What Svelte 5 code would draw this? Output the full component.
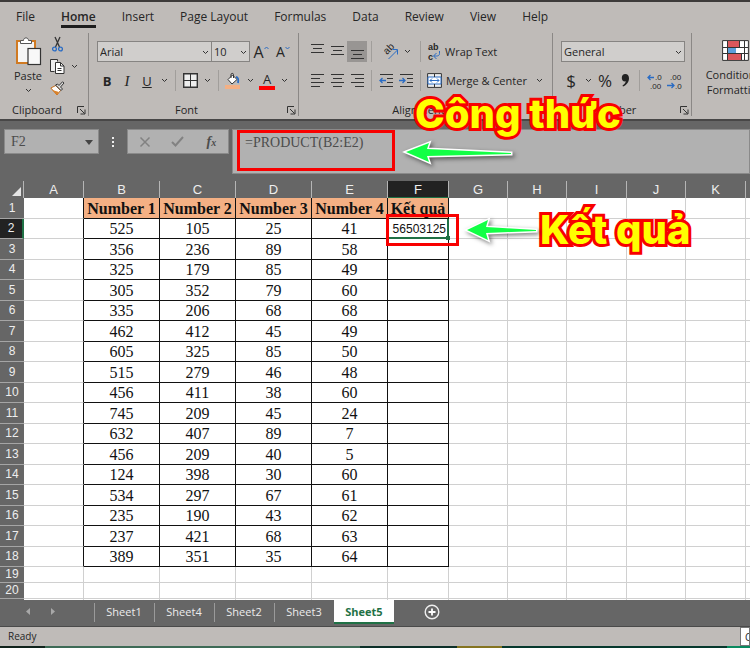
<script>
	const menu = ['File', 'Home', 'Insert', 'Page Layout', 'Formulas', 'Data', 'Review', 'View', 'Help'];

	const columns = [
		{ name: 'A', width: 60 },
		{ name: 'B', width: 76 },
		{ name: 'C', width: 76 },
		{ name: 'D', width: 76 },
		{ name: 'E', width: 76 },
		{ name: 'F', width: 61 },
		{ name: 'G', width: 59 },
		{ name: 'H', width: 59 },
		{ name: 'I', width: 60 },
		{ name: 'J', width: 59 },
		{ name: 'K', width: 60 },
		{ name: 'L', width: 59 }
	];

	const rows = [
		['Number 1', 'Number 2', 'Number 3', 'Number 4', 'Kết quả'],
		[525, 105, 25, 41, 56503125],
		[356, 236, 89, 58, ''],
		[325, 179, 85, 49, ''],
		[305, 352, 79, 60, ''],
		[335, 206, 68, 68, ''],
		[462, 412, 45, 49, ''],
		[605, 325, 85, 50, ''],
		[515, 279, 46, 48, ''],
		[456, 411, 38, 60, ''],
		[745, 209, 45, 24, ''],
		[632, 407, 89, 7, ''],
		[456, 209, 40, 5, ''],
		[124, 398, 30, 60, ''],
		[534, 297, 67, 61, ''],
		[235, 190, 43, 62, ''],
		[237, 421, 68, 63, ''],
		[389, 351, 35, 64, '']
	];
	const emptyRows = [19, 20, 21, 22];

	const sheets = ['Sheet1', 'Sheet4', 'Sheet2', 'Sheet3', 'Sheet5'];

	let active = $state('Sheet5');
	let tab = $state('Home');
	let formula = $state('=PRODUCT(B2:E2)');

	// line lengths for the text align icons
	const alignIcons = {
		left: ['1 14', '1 10', '1 14', '1 10'],
		center: ['1 14', '3 12', '1 14', '3 12'],
		right: ['1 14', '5 14', '1 14', '5 14']
	};
</script>

{#snippet chevron()}
	<svg class="chev" width="7" height="5" viewBox="0 0 7 5"><path d="M1 1l2.5 2.5L6 1" /></svg>
{/snippet}

{#snippet footer(label, launcher)}
	<div class="footer">
		<span>{label}</span>
		{#if launcher}
			<button class="launcher" aria-label="{label} settings">
				<svg width="9" height="9" viewBox="0 0 9 9"><path d="M.5 7V.5H7M3 3l4.5 4.5M8 3.5V8H3.5" /></svg>
			</button>
		{/if}
	</div>
{/snippet}

{#snippet lines(list, y)}
	<svg width="15" height="21" viewBox="0 0 15 21">
		{#each list as l, i}
			<path d="M{l.split(' ')[0]} {y + i * 4 + 0.5}H{l.split(' ')[1]}" />
		{/each}
	</svg>
{/snippet}

<div class="app">
	<nav class="menu">
		{#each menu as item}
			<button class:current={item === tab} onclick={() => (tab = item)}>{item}</button>
		{/each}
	</nav>

	<div class="ribbon">
		<section class="group clipboard">
			<div class="body">
				<button class="paste">
					<svg width="27" height="29" viewBox="0 0 27 29">
						<rect x="2" y="4" width="18" height="22" fill="#f5f5f5" stroke="#d07a22" stroke-width="2" />
						<path d="M5.500 6.500V3.500h3c0-3.500 5-3.500 5 0h3v3z" fill="#fff" stroke="#555" />
						<rect x="13" y="11.500" width="12.500" height="16" fill="#f8f8f8" stroke="#333" stroke-width="1.200" />
					</svg>
					<span>Paste</span>
					{@render chevron()}
				</button>
				<div class="clips">
					<button aria-label="Cut">
						<svg width="15" height="15" viewBox="0 0 15 15">
							<path d="M5 0l4.500 10M10 0L5.500 10" stroke-width="1.300" />
							<circle cx="4.500" cy="12" r="1.900" stroke="#2a6cc4" stroke-width="1.300" />
							<circle cx="10.500" cy="12" r="1.900" stroke="#2a6cc4" stroke-width="1.300" />
						</svg>
					</button>
					<button aria-label="Copy">
						<svg width="15" height="15" viewBox="0 0 15 15">
							<path d="M4.500 12.500h-4V.5h7v2" fill="#eee" />
							<path d="M5.500 3.500h5l3.500 3.500v7.500H5.500z" fill="#fff" />
							<path d="M10.500 3.500V7H14M7.500 9.500h4M7.500 11.500h4" />
						</svg>
						{@render chevron()}
					</button>
					<button aria-label="Format Painter">
						<svg width="15" height="15" viewBox="0 0 15 15">
							<path d="M.8 7l5-2.500 4.700 5L7 14z" fill="#fff" stroke="#c96f1c" />
							<path d="M1 7.500L7 14l2-3-5-1.500z" fill="#d9822b" stroke="none" />
							<path d="M5.500 4l5.500 5.500L12.500 8l-2-2L14 2 12.500.8 9 4.500 7.500 3z" fill="#ddd" />
						</svg>
					</button>
				</div>
			</div>
			{@render footer('Clipboard', true)}
		</section>

		<section class="group font">
			<div class="body">
				<div class="line">
					<label class="pick family"><select aria-label="Font"><option>Arial</option></select>{@render chevron()}</label>
					<label class="pick size"><select aria-label="Font size"><option>10</option></select>{@render chevron()}</label>
					<button class="grow" aria-label="Increase font size"><span>A</span><svg width="5" height="4" viewBox="0 0 5 4"><path d="M.5 3l2-2 2 2" stroke="#2a6cc4" /></svg></button>
					<button class="shrink" aria-label="Decrease font size"><span>A</span><svg width="5" height="4" viewBox="0 0 5 4"><path d="M.5 1l2 2 2-2" stroke="#2a6cc4" /></svg></button>
				</div>
				<div class="line">
					<button class="tool"><b>B</b></button>
					<button class="tool"><i>I</i></button>
					<button class="tool"><u>U</u></button>
					<button class="drop" aria-label="Underline styles">{@render chevron()}</button>
					<span class="rule"></span>
					<button class="tool" aria-label="Borders">
						<svg width="15" height="15" viewBox="0 0 15 15"><path d="M.7.7h13.600v13.600H.7z" fill="#eee" stroke-width="1.400" /><path d="M7.500 1v13M1 7.500h13" /></svg>
					</button>
					<button class="drop" aria-label="Border styles">{@render chevron()}</button>
					<span class="rule"></span>
					<button class="tool" aria-label="Fill color">
						<svg width="16" height="16" viewBox="0 0 16 16">
							<path d="M3 6.500L7.500 2l4.500 4.500L7 11z" fill="#fff" />
							<path d="M6 5V1.500c0-1.500 2.500-1.500 2.500 0V5" />
							<path d="M11 4c2.500 0 2.500 3 2 6" stroke="#2a6cc4" stroke-width="1.800" />
							<path d="M0 12h15v4H0z" fill="#f4b084" stroke="none" />
						</svg>
					</button>
					<button class="drop" aria-label="Fill colors">{@render chevron()}</button>
					<button class="tool color">A</button>
					<button class="drop" aria-label="Font colors">{@render chevron()}</button>
				</div>
			</div>
			{@render footer('Font', true)}
		</section>

		<section class="group alignment">
			<div class="body">
				<div class="line">
					<button class="tool" aria-label="Top align">{@render lines(['1 14', '3 12', '1 14'], 3)}</button>
					<button class="tool" aria-label="Middle align">{@render lines(['1 14', '3 12', '1 14'], 5)}</button>
					<button class="tool pressed" aria-label="Bottom align">{@render lines(['1 14', '3 12', '1 14'], 9)}</button>
					<span class="rule"></span>
					<button class="angle" aria-label="Orientation">
						<svg width="17" height="17" viewBox="0 0 17 17">
							<text x="0" y="0" transform="translate(5 12) rotate(-45)">ab</text>
							<path d="M6.500 16l9-9M10.500 6.500H15.500V11.500" stroke="#2a6cc4" />
						</svg>
						{@render chevron()}
					</button>
					<span class="rule"></span>
					<button class="wide">
						<svg width="14" height="16" viewBox="0 0 14 16">
							<text x="1" y="6">ab</text>
							<text x="1" y="16">c</text>
							<path d="M12.500 7v2.500c0 2-1.500 2.500-3 2.500H7M9.500 9L6.500 12l3 3" stroke="#2a6cc4" />
						</svg>
						Wrap Text
					</button>
				</div>
				<div class="line">
					{#each Object.entries(alignIcons) as [name, list]}
						<button class="tool" aria-label="Align {name}">{@render lines(list, 4)}</button>
					{/each}
					<span class="rule"></span>
					<button class="tool" aria-label="Decrease indent">
						<svg width="15" height="15" viewBox="0 0 15 15"><path d="M1 1.500h13M8 5.500h6M8 9.500h6M1 13.500h13" /><path d="M7 7.500H1M3.500 5L1 7.500 3.500 10" stroke="#2a6cc4" stroke-width="1.300" /></svg>
					</button>
					<button class="tool" aria-label="Increase indent">
						<svg width="15" height="15" viewBox="0 0 15 15"><path d="M1 1.500h13M8 5.500h6M8 9.500h6M1 13.500h13" /><path d="M0 7.500h6M3.500 5L6 7.500 3.500 10" stroke="#2a6cc4" stroke-width="1.300" /></svg>
					</button>
					<span class="rule"></span>
					<button class="wide">
						<svg width="15" height="15" viewBox="0 0 15 15">
							<path d="M.6.6h13.800v13.800H.6z" fill="#eee" />
							<path d="M1 4h13v7H1z" fill="#fff" stroke="#2a6cc4" />
							<path d="M7.500 1v3M7.500 11v3" />
							<path d="M3 7.500h9M5 5.500l-2 2 2 2M10 5.500l2 2-2 2" stroke="#2a6cc4" />
						</svg>
						Merge &amp; Center
						{@render chevron()}
					</button>
				</div>
			</div>
			{@render footer('Alignment', true)}
		</section>

		<section class="group number">
			<div class="body">
				<div class="line">
					<label class="pick general"><select aria-label="Number format"><option>General</option></select>{@render chevron()}</label>
				</div>
				<div class="line">
					<button class="tool sign">$</button>
					<button class="drop" aria-label="Currencies">{@render chevron()}</button>
					<button class="tool sign">%</button>
					<button class="tool" aria-label="Comma style">
						<svg width="9" height="13" viewBox="0 0 9 13"><path d="M4.200 0C6.500 0 8 1.500 8 4.200 8 8 5.500 11 2 12.500l-.5-1C3.500 10.300 4.500 9 4.700 7.300 2.500 8 .8 6.300.8 4 .8 1.500 2.200 0 4.200 0z" fill="#222" stroke="none" /></svg>
					</button>
					<span class="rule"></span>
					<button class="tool" aria-label="Increase decimal">
						<svg width="15" height="16" viewBox="0 0 15 16"><text x="8" y="7">.0</text><text x="3" y="16">.00</text><path d="M7 4.500H1M3.500 2L1 4.500 3.500 7" stroke="#2a6cc4" stroke-width="1.300" /></svg>
					</button>
					<button class="tool" aria-label="Decrease decimal">
						<svg width="15" height="16" viewBox="0 0 15 16"><text x="3" y="7">.00</text><text x="8" y="16">.0</text><path d="M0 12.500h7M4.500 10L7 12.500 4.500 15" stroke="#2a6cc4" stroke-width="1.300" /></svg>
					</button>
				</div>
			</div>
			{@render footer('Number', true)}
		</section>

		<section class="group styles">
			<button class="conditional">
				<svg width="27" height="21" viewBox="0 0 27 21">
					<path d="M.6.6h25.800v19.800H.6z" fill="#fff" />
					<path d="M6 1h11v6H6zM6 14h13v6H6z" fill="#d9575c" stroke="none" />
					<path d="M6 7h8v7H6z" fill="#5b9fdb" stroke="none" />
					<path d="M1 7.500h25M1 13.500h25M5.500 1v19M17.500 1v6M19.500 14v6M22.500 1v19" />
				</svg>
				<span>Conditional</span>
				<span>Formatting</span>
			</button>
		</section>
	</div>

	<div class="formula-bar">
		<label class="name-box">
			<select aria-label="Name box"><option>F2</option></select>
			<svg width="8" height="5" viewBox="0 0 8 5"><path d="M0 0h8L4 5z" fill="#444" stroke="none" /></svg>
		</label>
		<span class="dots"></span>
		<div class="entry">
			<button aria-label="Cancel"><svg width="12" height="12" viewBox="0 0 12 12"><path d="M1.500 1.500l9 9M10.500 1.500l-9 9" stroke="#828282" stroke-width="1.500" /></svg></button>
			<button aria-label="Enter"><svg width="13" height="11" viewBox="0 0 13 11"><path d="M1 6l3.500 3.500L12 1" stroke="#828282" stroke-width="2" /></svg></button>
			<button class="fx">f<small>x</small></button>
		</div>
		<div class="formula">
			<input aria-label="Formula" bind:value={formula} />
		</div>
		<div class="callout top">
			<strong>Công thức</strong>
			<svg class="arrow" width="112" height="28" viewBox="0 0 112 28"><path d="M3 12L26 3l-2 6 84 4v1l-84 2 2 6z" /></svg>
		</div>
	</div>

	<main class="grid">
		<table>
			<colgroup>
				<col style="width: 24px" />
				{#each columns as col}
					<col style="width: {col.width}px" />
				{/each}
			</colgroup>
			<thead>
				<tr>
					<th class="corner"><svg width="9" height="9" viewBox="0 0 9 9"><path d="M9 0v9H0z" fill="#e4e4e4" stroke="none" /></svg></th>
					{#each columns as col}
						<th class:selected={col.name === 'F'}>{col.name}</th>
					{/each}
				</tr>
			</thead>
			<tbody>
				{#each rows as row, r}
					<tr>
						<th class:selected={r === 1}>{r + 1}</th>
						<td class="edge"></td>
						{#each row as value, c}
							{#if r === 1 && c === 4}
								<td class="data result">
									{value}
									<div class="callout side">
										<svg class="arrow" width="76" height="28" viewBox="0 0 76 28"><path d="M3 14L24 4l-2 7 50 3v1l-50 2 2 7z" /></svg>
										<strong>Kết quả</strong>
									</div>
								</td>
							{:else}
								<td class="data" class:title={r === 0}>{value}</td>
							{/if}
						{/each}
						{#each columns.slice(6) as _}
							<td></td>
						{/each}
					</tr>
				{/each}
				{#each emptyRows as n}
					<tr class="empty">
						<th>{n}</th>
						{#each columns as _}
							<td></td>
						{/each}
					</tr>
				{/each}
			</tbody>
		</table>
	</main>

	<div class="sheets">
		<div class="scroll">
			<button aria-label="Previous sheet"><svg width="4" height="7" viewBox="0 0 4 7"><path d="M4 0v7L0 3.500z" fill="#a8a8a8" stroke="none" /></svg></button>
			<button aria-label="Next sheet"><svg width="4" height="7" viewBox="0 0 4 7"><path d="M0 0v7l4-3.500z" fill="#a8a8a8" stroke="none" /></svg></button>
		</div>
		{#each sheets as sheet}
			<button class="sheet" class:active={sheet === active} onclick={() => (active = sheet)}>{sheet}</button>
		{/each}
		<button class="add" aria-label="New sheet">
			<svg width="16" height="16" viewBox="0 0 16 16"><circle cx="8" cy="8" r="6.800" stroke="#eee" stroke-width="1.400" /><path d="M8 4.500v7M4.500 8h7" stroke="#fff" stroke-width="1.800" /></svg>
		</button>
	</div>

	<footer class="status"><span>Ready</span><span class="tip">C</span></footer>
	<div class="taskbar"></div>
</div>

<style>
	:global(body) {
		margin: 0;
		background: #666;
	}

	.app {
		height: 100vh;
		display: flex;
		flex-direction: column;
		overflow: hidden;
		box-sizing: border-box;
		border-top: 2px solid #3d3b3a;
		font-family: 'Open Sans', 'Noto Sans', sans-serif;
		font-size: 11px;
		line-height: 16px;
		color: #262626;
	}

	.app :global(*) {
		box-sizing: border-box;
	}

	button,
	select,
	input {
		font: inherit;
		color: inherit;
		margin: 0;
		padding: 0;
		border: none;
		border-radius: 0;
		background: none;
	}

	button {
		display: flex;
		align-items: center;
		justify-content: center;
		white-space: nowrap;
	}

	svg {
		display: block;
		flex: none;
		overflow: visible;
		fill: none;
		stroke: #333;
	}

	svg text {
		font-family: 'Liberation Sans', sans-serif;
		font-size: 10px;
		fill: #262626;
		stroke: none;
	}

	.number svg text {
		font-size: 8px;
	}

	.wide svg text {
		font-size: 9px;
		font-weight: bold;
	}

	/* menu */

	.menu {
		flex: none;
		display: flex;
		gap: 26px;
		height: 31px;
		padding: 6px 16px 5px;
		background: #bfbbb8;
		font-size: 12px;
	}

	.menu button {
		border-bottom: 3px solid transparent;
	}

	.menu .current {
		border-bottom-color: #1d1d1d;
		font-weight: 600;
	}

	/* ribbon */

	.ribbon {
		flex: none;
		display: flex;
		height: 86px;
		padding-bottom: 3px;
		background: #bfbbb8;
		overflow: hidden;
	}

	.group {
		flex: none;
		display: flex;
		flex-direction: column;
		justify-content: space-between;
		padding: 8px 0 0 8px;
		border-right: 1px solid #8b8886;
	}

	.clipboard {
		width: 89px;
		padding-top: 4px;
	}

	.font {
		width: 210px;
	}

	.alignment {
		width: 254px;
	}

	.number {
		width: 139px;
	}

	.footer {
		display: flex;
		align-items: center;
		margin-left: -8px;
		line-height: 12px;
	}

	.footer span {
		flex: 1;
		text-align: center;
	}

	.launcher {
		width: 14px;
	}

	.clipboard .body {
		display: flex;
		gap: 2px;
	}

	.paste {
		flex-direction: column;
		justify-content: flex-start;
		width: 40px;
	}

	.paste span {
		margin: 2px 0 4px;
	}

	.clips {
		display: flex;
		flex-direction: column;
		gap: 7px;
	}

	.clips button {
		gap: 6px;
		justify-content: flex-start;
	}

	.line {
		display: flex;
		align-items: center;
		height: 21px;
	}

	.line + .line {
		margin-top: 8px;
	}

	.tool {
		width: 20px;
		height: 21px;
		font-size: 13px;
	}

	.tool i {
		font-family: 'Liberation Serif', serif;
		font-size: 15px;
	}

	.pressed {
		background: #989593;
	}

	.drop {
		width: 14px;
		height: 21px;
	}

	.rule {
		width: 1px;
		height: 21px;
		margin: 0 4px;
		background: #a19e9b;
	}

	.pick {
		position: relative;
		height: 21px;
		background: #d0cecc;
		border: 1px solid #868482;
	}

	.pick select,
	.name-box select {
		display: block;
		width: 100%;
		height: 100%;
		padding-left: 2px;
		appearance: none;
	}

	.pick svg {
		position: absolute;
		right: 2px;
		top: 8px;
	}

	.family {
		width: 115px;
	}

	.size {
		width: 39px;
		margin-left: -1px;
	}

	.general {
		width: 124px;
	}

	.grow,
	.shrink {
		align-items: flex-start;
		width: 22px;
	}

	.grow span {
		font-size: 16px;
	}

	.shrink span {
		font-size: 14px;
	}

	.grow svg,
	.shrink svg {
		margin-top: 2px;
	}

	.color {
		width: 16px;
		height: 18px;
		margin: 0 2px;
		line-height: 14px;
		border-bottom: 4px solid #f00;
	}

	.sign {
		font-size: 17px;
	}

	.angle {
		width: 40px;
		gap: 5px;
	}

	.wide {
		gap: 4px;
		padding-left: 2px;
	}

	.wide .chev {
		margin-left: 5px;
	}

	.styles {
		flex: 1;
		min-width: 0;
		padding-top: 7px;
		border-right: none;
	}

	.conditional {
		flex-direction: column;
		width: 70px;
		line-height: 15px;
	}

	.conditional svg {
		margin-bottom: 6px;
	}

	/* formula bar */

	.formula-bar {
		flex: none;
		position: relative;
		display: flex;
		align-items: flex-start;
		height: 62px;
		padding: 8px 0 0 4px;
		background: #666;
		border-top: 2px solid #484747;
		font-family: 'Liberation Serif', serif;
		font-size: 14px;
		color: #4c4c4c;
	}

	.name-box,
	.entry {
		height: 25px;
		background: #b1b1b1;
		border: 1px solid #8a8a8a;
	}

	.name-box {
		position: relative;
		width: 95px;
	}

	.name-box select {
		padding-left: 6px;
	}

	.name-box svg {
		position: absolute;
		right: 5px;
		top: 10px;
	}

	.dots {
		width: 2px;
		height: 10px;
		margin: 8px 13px 0;
		background: repeating-linear-gradient(#eee 0 2px, transparent 2px 4px);
	}

	.entry {
		display: grid;
		grid-template-columns: 1fr 1fr 1fr;
		width: 102px;
	}

	.fx {
		font-style: italic;
		font-weight: bold;
	}

	.fx small {
		font-size: 10px;
		padding-top: 3px;
	}

	.formula {
		flex: 1;
		height: 45px;
		margin-left: 3px;
		background: #b1b1b1;
		border: 1px solid #8a8a8a;
	}

	.formula input {
		display: block;
		width: 158px;
		height: 41px;
		margin-left: 4px;
		padding: 0 0 15px 5px;
		border: 3px solid #f80000;
	}

	/* callouts */

	.callout {
		position: absolute;
		z-index: 2;
		pointer-events: none;
	}

	.callout strong {
		font-family: Inter, Roboto, sans-serif;
		font-size: 40px;
		font-weight: 800;
		line-height: 46px;
		color: #ff0;
		white-space: nowrap;
		-webkit-text-stroke: 6px #f80000;
		paint-order: stroke fill;
	}

	.arrow {
		filter: drop-shadow(2px 2px 2px rgb(0 0 0 / 0.5));
	}

	.arrow path {
		fill: #12ff45;
		stroke: #fff;
		stroke-width: 3;
		paint-order: stroke fill;
	}

	.top {
		left: 403px;
		top: -30px;
	}

	.top strong {
		display: block;
		margin: 0 0 3px 12px;
	}

	/* grid */

	.grid {
		flex: 1;
		min-height: 0;
		overflow: hidden;
		background: #fff;
		font-family: 'Liberation Sans', sans-serif;
	}

	table {
		width: 100%;
		table-layout: fixed;
		border-spacing: 0;
	}

	th,
	td {
		padding: 0;
		text-align: center;
		line-height: 15px;
	}

	th {
		background: #666;
		color: #eee;
		font-weight: normal;
	}

	thead th {
		height: 17px;
		border-right: 1px solid #b5b5b5;
		font-size: 13px;
	}

	thead .selected {
		background: #222;
		border-bottom: 1px solid #1f7145;
	}

	.corner svg {
		margin: 3px 2px 0 auto;
	}

	tbody th {
		border-bottom: 1px solid #a5a5a5;
		font-size: 12px;
	}

	tbody .selected {
		background: #222;
		border-right: 2px solid #1f7145;
	}

	tbody tr {
		height: 20px;
	}

	tbody tr:nth-child(odd) {
		height: 21px;
	}

	tbody tr.empty {
		height: 16px;
	}

	td {
		border-right: 1px solid #d0d0d0;
		border-bottom: 1px solid #d0d0d0;
	}

	.edge {
		border-right-color: #111;
	}

	.data {
		border-color: #111;
		font-family: 'Liberation Serif', serif;
		font-size: 16px;
		color: #111;
	}

	.title {
		background: #f4b084;
		font-weight: bold;
		white-space: nowrap;
	}

	.result {
		position: relative;
		padding: 2px 1px 0 0;
		border: solid #1f7145;
		border-width: 0 2px 2px 0;
		font-family: 'Liberation Sans', sans-serif;
		font-size: 12px;
		text-align: right;
	}

	.result::before {
		content: '';
		position: absolute;
		inset: -5px -12px -9px -2px;
		border: 3px solid #f80000;
	}

	.result::after {
		content: '';
		position: absolute;
		right: -3px;
		bottom: -3px;
		width: 4px;
		height: 4px;
		background: #1f7145;
	}

	.side {
		left: 76px;
		top: -12px;
		display: flex;
		align-items: center;
	}

	/* sheet tabs */

	.sheets {
		flex: none;
		display: flex;
		align-items: stretch;
		height: 27px;
		padding-bottom: 3px;
		background: #666;
		border-bottom: 1px solid #4a4a4a;
		color: #ececec;
	}

	.scroll {
		display: flex;
		gap: 21px;
		width: 94px;
		padding-left: 26px;
	}

	.sheet {
		position: relative;
		width: 60px;
		height: 24px;
	}

	.sheet::before {
		content: '';
		position: absolute;
		left: 0;
		top: 3px;
		bottom: 2px;
		border-left: 1px solid #9a9a9a;
	}

	.active {
		padding-top: 2px;
		background: #fff;
		border-bottom: 2px solid #1f7145;
		font-weight: bold;
		color: #1f7145;
	}

	.active::before {
		display: none;
	}

	.add {
		margin-left: 30px;
	}

	/* status bar */

	.status {
		flex: none;
		display: flex;
		justify-content: space-between;
		height: 19px;
		padding-left: 8px;
		background: #bfbbb8;
		font-size: 10px;
		line-height: 18px;
	}

	.tip {
		width: 10px;
		padding-left: 4px;
		overflow: hidden;
		background: #fff;
		border: 1px solid #777;
	}

	.taskbar {
		flex: none;
		height: 2px;
		background: linear-gradient(
			90deg,
			#10231c 6%,
			#3d6a56 6% 48%,
			#0c2f28 48% 61%,
			#857420 61% 67%,
			#06382d 67% 97%,
			#0a8a5f 97%
		);
	}
</style>
